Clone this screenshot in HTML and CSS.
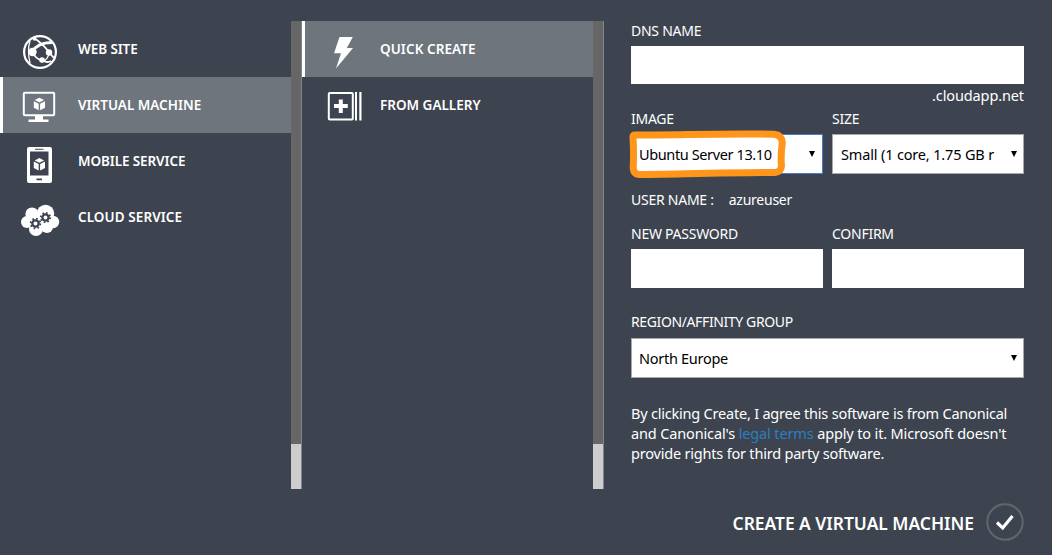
FILE: index.html
```html
<!DOCTYPE html>
<html lang="en">
<head>
<meta charset="utf-8">
<title>Create a virtual machine</title>
<link rel="stylesheet" href="styles.css">
</head>
<body>
<main class="drawer">
  <nav class="menu">
    <a class="item"><svg class="icon" viewBox="0 0 40 40"><circle cx="20" cy="20" r="15.900" fill="none" stroke="#fff" stroke-width="2.200"/><g fill="none" stroke="#fff"><path d="M12 20Q18 10 33 10.500" stroke-width="3"/><path d="M14 6Q22 11 29 20Q32 24 34 26M12 19Q15 27 23 29Q28 31 31 29" stroke-width="1.800"/><path d="M10 9Q7 18 10 31M29 20Q29 27 22 30" stroke-width="1.300"/></g><g fill="#fff"><circle cx="12.500" cy="20" r="4.200"/><circle cx="29" cy="20.500" r="3.200"/><circle cx="22" cy="28" r="2.800"/><circle cx="14.500" cy="7" r="1.800"/></g></svg><span class="t1">WEB SITE</span></a>
    <a class="item selected"><svg class="icon" viewBox="0 0 40 40"><rect x="3.800" y="4.800" width="30.400" height="22.400" rx="1" fill="none" stroke="#fff" stroke-width="2"/><path d="M15 28h8v3.500h5.500v2.500h-20v-2.500H15z" fill="#fff"/><g fill="#fff"><path d="M19.400 9.800l4.700 2.300-4.700 2.400-4.700-2.400z"/><path d="M13.800 13.200l4.900 2.500v6.600l-4.900-2.600zM25 13.200l-4.900 2.500v6.600l4.900-2.600z"/></g></svg><span class="t2">VIRTUAL MACHINE</span></a>
    <a class="item"><svg class="icon" viewBox="0 0 40 40"><path fill="#fff" fill-rule="evenodd" d="M9 3h21a2 2 0 0 1 2 2v32a2 2 0 0 1-2 2H9a2 2 0 0 1-2-2V5a2 2 0 0 1 2-2zM10 7.500v24h18.500v-24zM15 4.700v1h8.500v-1zM16.500 34.500v1.800h5.500v-1.800z"/><g fill="#fff" transform="translate(0 4.300)"><path d="M19.400 9.800l4.700 2.300-4.700 2.400-4.700-2.400z"/><path d="M13.800 13.200l4.900 2.500v6.600l-4.900-2.600zM25 13.200l-4.900 2.500v6.600l4.900-2.600z"/></g></svg><span class="t3">MOBILE SERVICE</span></a>
    <a class="item"><svg class="icon" viewBox="0 0 40 40"><g fill="#fff"><circle cx="12" cy="14" r="6.600"/><circle cx="25.500" cy="13.500" r="8.700"/><circle cx="7" cy="22" r="6"/><circle cx="33" cy="22" r="6.200"/><circle cx="16" cy="29" r="7"/><circle cx="27" cy="27" r="6"/><path d="M8 14h22v12H8z"/></g><g fill="none" stroke="#3d444f"><circle cx="15.500" cy="23.500" r="3.200" stroke-width="2.300"/><circle cx="15.500" cy="23.500" r="4.900" stroke-width="1.800" stroke-dasharray="1.700 2.148"/><circle cx="25.500" cy="17.500" r="3.100" stroke-width="2.300"/><circle cx="25.500" cy="17.500" r="4.700" stroke-width="1.800" stroke-dasharray="1.600 2.091"/></g></svg><span class="t4">CLOUD SERVICE</span></a>
  </nav>
  <div class="scrollbar"><div class="thumb"></div></div>
  <nav class="menu second">
    <a class="item selected"><svg class="icon" viewBox="0 0 40 40"><path fill="#fff" d="M16 5h13.300l-6 11h6.200L12.500 36.500l5-15.300h-7z" transform="translate(-.5 0)"/></svg><span class="t5">QUICK CREATE</span></a>
    <a class="item"><svg class="icon" viewBox="0 0 40 40"><rect x="4.800" y="5" width="24" height="26.500" rx="1" fill="none" stroke="#fff" stroke-width="2"/><path fill="#fff" d="M14.800 11.500h4v4.600h5v4h-5V25h-4v-4.900H10v-4h4.800zM31 4h2v28.500h-2zM35.300 4h2.200v28.500h-2.200z"/></svg><span class="t6">FROM GALLERY</span></a>
  </nav>
  <div class="scrollbar"><div class="thumb"></div></div>
  <form class="form">
    <div class="label"><span class="l-dns">DNS NAME</span></div>
    <div class="box dns"></div>
    <div class="suffix"><span>.cloudapp.net</span></div>
    <div class="pair">
      <div><div class="label"><span class="l-image">IMAGE</span></div>
        <div class="box select focused"><span class="v-image">Ubuntu Server 13.10</span><i class="arrow"></i>
          <svg class="marker" viewBox="0 0 160 52"><path d="M6 6C50 6 105 4 145 5.300Q153 6 153.300 14Q151.500 26 152.500 37Q152 43 146 43.500C100 43.500 50 45 10 45.500Q4.500 45 4.200 39Q5 24 4 8Q4 6 6 6Z" fill="none" stroke="#ff951a" stroke-width="7" stroke-linejoin="round"/></svg></div></div>
      <div><div class="label"><span class="l-size">SIZE</span></div>
        <div class="box select"><span class="v-size">Small (1 core, 1.75 GB r</span><i class="arrow"></i></div></div>
    </div>
    <div class="user label"><span class="l-user">USER NAME :</span><span class="v-user">azureuser</span></div>
    <div class="pair passwords">
      <div><div class="label"><span class="l-new">NEW PASSWORD</span></div><div class="box pass"></div></div>
      <div><div class="label"><span class="l-confirm">CONFIRM</span></div><div class="box pass"></div></div>
    </div>
    <div class="label region"><span class="l-region">REGION/AFFINITY GROUP</span></div>
    <div class="box select"><span class="v-region">North Europe</span><i class="arrow"></i></div>
    <p class="terms"><span class="p1">By clicking Create, I agree this software is from Canonical</span><br><span class="p2">and Canonical's <a>legal terms</a> apply to it. Microsoft doesn't</span><br><span class="p3">provide rights for third party software.</span></p>
    <div class="submit"><span class="create">CREATE A VIRTUAL MACHINE</span><svg class="check" viewBox="0 0 38 38"><circle cx="19" cy="19" r="17.700" fill="none" stroke="#606670" stroke-width="2"/><path d="M11 19.500l5.700 5.500L26.500 13" fill="none" stroke="#fff" stroke-width="3.200"/></svg></div>
  </form>
</main>
</body>
</html>
```
FILE: styles.css
```css
* { box-sizing: border-box; }
body { margin: 0; background: #3d444f; color: #fff; font: 14px/20px "Noto Sans", "Open Sans", sans-serif; }
.drawer { display: flex; width: 1052px; height: 555px; padding-top: 21px; overflow: hidden; }
.menu { width: 291px; flex: none; }
.item { display: flex; align-items: center; height: 56px; padding-left: 20px; font-size: 13.500px; font-weight: 600; white-space: nowrap; }
.item.selected { background: #6e757c; border-left: 3px solid #fff; padding-left: 17px; }
.icon { width: 40px; height: 40px; margin: 5px 18px 0 0; flex: none; }
.t1 { letter-spacing: -.1px; }
.t3 { letter-spacing: -.1px; }
.t4, .t5 { letter-spacing: .08px; }
.second .item { padding-left: 22px; }
.second .icon { margin-right: 16px; }
.second .item.selected { padding-left: 19px; }
.scrollbar { width: 11px; height: 468px; flex: none; background: #666; border-right: 1px solid #80858c; display: flex; align-items: flex-end; }
.thumb { width: 10px; height: 45px; background: #cdcdcd; }
.form { width: 393px; margin-left: 27px; flex: none; white-space: nowrap; }
.label { height: 20px; margin-bottom: 5px; font-size: 14px; letter-spacing: -.25px; }
.box { background: #fff; color: #000; }
.dns { height: 38px; }
.suffix { height: 20px; margin: 1px 0 4px; display: flex; justify-content: flex-end; font-size: 14.500px; letter-spacing: -.12px; }
.pair { display: grid; grid-template-columns: 192px 192px; gap: 9px; }
.select { position: relative; height: 40px; border: 1px solid #a9a9a9; padding: 0 6px 1px 7px; display: flex; align-items: center; justify-content: space-between; font-size: 14.500px; }
.v-image { letter-spacing: -.38px; }
.v-size { padding-left: 1px; letter-spacing: -.16px; }
.v-region { letter-spacing: -.28px; }
.focused { border: 1px solid #4d79cc; padding-right: 7px; }
.arrow { border: 3.500px solid transparent; border-top: 6px solid #000; border-bottom: 0; }
.marker { position: absolute; left: -3px; top: -6px; width: 160px; height: 52px; }
.user { margin: 16px 0 14px; display: flex; gap: 15px; }
.pass { height: 39px; }
.region { margin: 24px 0 6px; letter-spacing: -.38px; }
.terms { margin: 25px 0 40px; font-size: 14.500px; line-height: 20px; }
.p1 { letter-spacing: -.21px; }
.p2 { letter-spacing: -.14px; }
.p3 { letter-spacing: -.2px; }
.terms a { color: #2a7fc0; }
.submit { display: flex; justify-content: flex-end; align-items: center; gap: 12px; height: 38px; font-size: 17.400px; font-weight: 600; }
.create { padding-top: 2px; }
.check { width: 38px; height: 38px; }
```
